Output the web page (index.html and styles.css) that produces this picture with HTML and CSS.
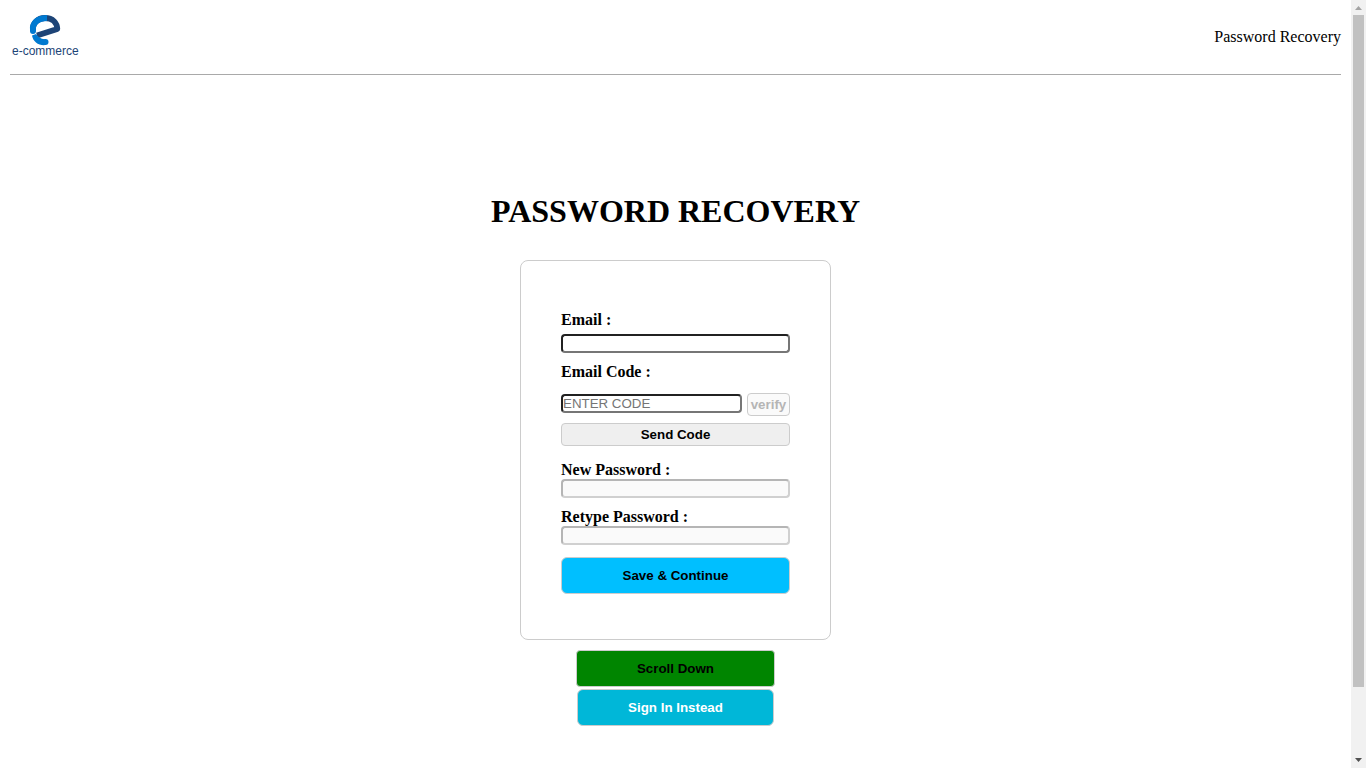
FILE: index.html
```html
<!DOCTYPE html>
<html lang="en">
<head>
<meta charset="utf-8">
<title>Password Recovery</title>
<link rel="stylesheet" href="styles.css">
</head>
<body>
<div class="page">
  <header class="header">
    <svg class="logo" viewBox="0 0 70 44" role="img" aria-label="e-commerce">
      <path d="M23 16C22 8 28 3 35 3C43 3 47 8 47.300 14L27 20.500" fill="none" stroke="#1d4477" stroke-width="5.800" stroke-linejoin="round"/>
      <path d="M23 15C22 8 28 3 37 3" fill="none" stroke="#0079d0" stroke-width="6"/>
      <circle cx="23" cy="16" r="3" fill="#0079d0"/>
      <path d="M22 20.500L26 19Q30 25 36 24V30C29 31 23 27 22 20.500Z" fill="#0079d0"/>
      <circle cx="35.500" cy="27" r="3" fill="#0079d0"/>
      <text class="logo-text" x="2" y="40">e-commerce</text>
    </svg>
    <span>Password Recovery</span>
  </header>
  <main class="main">
    <h1 class="title">PASSWORD RECOVERY</h1>
    <form class="card">
      <label class="label" for="email">Email :</label>
      <input class="input email" id="email" type="email">
      <label class="label" for="code">Email Code :</label>
      <div class="code-row">
        <input class="input code" id="code" type="text" placeholder="ENTER CODE">
        <button class="button verify" type="button" disabled>verify</button>
      </div>
      <button class="button send" type="button">Send Code</button>
      <label class="label" for="new-password">New Password :</label>
      <input class="input new-password" id="new-password" type="password" disabled>
      <label class="label" for="retype-password">Retype Password :</label>
      <input class="input retype-password" id="retype-password" type="password" disabled>
      <button class="button large save" type="submit">Save &amp; Continue</button>
    </form>
    <div class="actions">
      <button class="button large scroll" type="button">Scroll Down</button>
      <button class="button large signin" type="button">Sign In Instead</button>
    </div>
  </main>
</div>
<div class="scrollbar" aria-hidden="true">
  <svg class="arrow" viewBox="0 0 15 15"><path d="M4 10L7.500 6L11 10Z" fill="#a3a3a3"/></svg>
  <div class="track"><div class="thumb"></div></div>
  <svg class="arrow" viewBox="0 0 15 15"><path d="M4 5L7.500 9L11 5Z" fill="#505050"/></svg>
</div>
</body>
</html>
```
FILE: styles.css
```css
* { box-sizing: border-box; }
body {
  display: flex;
  height: 100vh;
  margin: 0;
  overflow: hidden;
  background: #fff;
  font: 16px/18px "Liberation Serif", "Times New Roman", serif;
  color: #000;
}
.page { flex: 1; min-width: 0; padding: 0 10px; }
.header {
  display: flex;
  justify-content: space-between;
  align-items: center;
  padding: 15px 0;
  border-bottom: 1px solid #a9a9a9;
}
.logo { width: 70px; height: 44px; display: block; }
.logo-text { font: 12px "Liberation Sans", Arial, sans-serif; fill: #1d4477; }
.main { display: flex; flex-direction: column; align-items: center; }
.title { margin: 118px 0 31px; font-size: 32px; line-height: 36px; }
.card {
  display: flex;
  flex-direction: column;
  width: 311px;
  padding: 50px 40px 45px;
  border: 1px solid #ccc;
  border-radius: 8px;
}
.label { font-weight: bold; }
.input {
  width: 100%;
  height: 19px;
  padding: 0;
  border: 2px inset #767676;
  border-radius: 4px;
  background: #fff;
  font-family: "Liberation Sans", Arial, sans-serif;
}
.input:disabled {
  border-style: solid;
  border-color: #b5b5b5 #d0d0d0 #d0d0d0 #b5b5b5;
  background: #fafafa;
}
.input::placeholder { color: #757575; }
.email { margin: 5px 0 10px; }
.code-row { display: flex; gap: 5px; margin: 12px 0 7px; }
.code { flex: 1; min-width: 0; margin-top: 1px; }
.button {
  height: 23px;
  padding: 0;
  border: 1px solid #ccc;
  border-radius: 4px;
  background: #efefef;
  color: #000;
  font-family: "Liberation Sans", Arial, sans-serif;
  font-weight: bold;
}
.verify { width: 43px; color: #b5b5b5; background: #fafafa; }
.send { margin-bottom: 15px; }
.new-password { margin-bottom: 10px; }
.retype-password { margin-bottom: 12px; }
.large { height: 37px; }
.save { border-radius: 6px; background: #00bfff; }
.actions { display: flex; flex-direction: column; align-items: center; gap: 2px; padding-top: 10px; }
.scroll { width: 199px; background: #008500; }
.signin { width: 197px; border-radius: 6px; background: #00b7d8; color: #fff; }
.scrollbar { display: flex; flex-direction: column; width: 15px; background: #f1f1f1; }
.arrow { display: block; width: 15px; height: 15px; }
.track { flex: 1; padding: 0 2px; }
.thumb { height: 91%; background: #c1c1c1; }
```
